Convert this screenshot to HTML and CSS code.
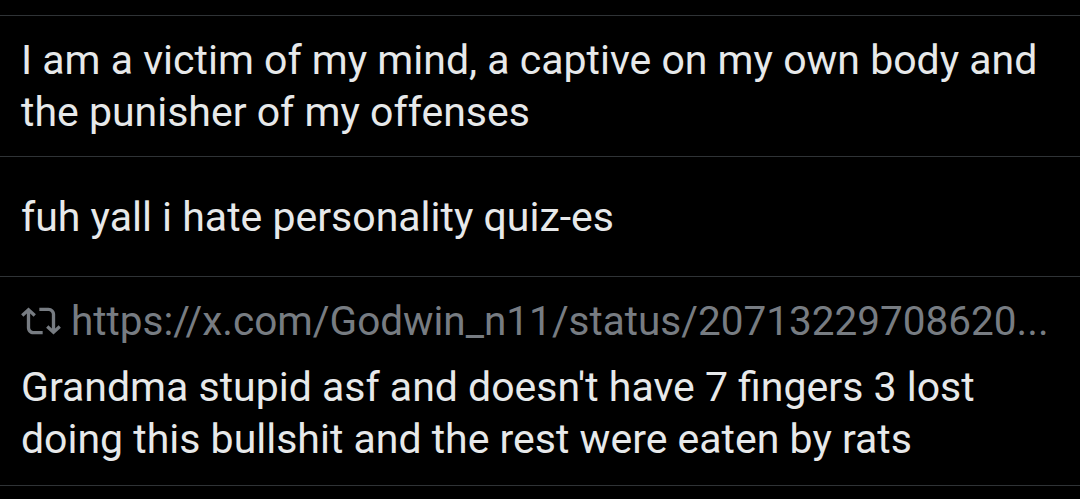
FILE: index.html
```html
<!DOCTYPE html>
<html lang="en">
<head>
    <meta charset="UTF-8">
    <meta name="viewport" content="width=device-width, initial-scale=1.0">
    <title>Posts</title>
    <link rel="stylesheet" href="styles.css">
</head>
<body>
    <div class="feed">
        <div class="post">
            <p class="post-text">I am a victim of my mind, a captive on my own body and the punisher of my offenses</p>
        </div>

        <div class="post post-short">
            <p class="post-text">fuh yall i hate personality quiz-es</p>
        </div>

        <!-- Repost with link -->
        <div class="post post-repost">
            <div class="repost">
                <svg class="repost-icon" viewBox="0 0 24 24" aria-hidden="true">
                    <path d="M4.5 3.88l4.432 4.14-1.364 1.46L5.5 7.55V16c0 1.1.896 2 2 2H13v2H7.5c-2.209 0-4-1.79-4-4V7.55L1.432 9.48.068 8.02 4.5 3.88zM16.5 6H11V4h5.5c2.209 0 4 1.790 4 4v8.45l2.068-1.93 1.364 1.46-4.432 4.14-4.432-4.14 1.364-1.46 2.068 1.93V8c0-1.1-.896-2-2-2z"/>
                </svg>
                <span class="repost-link">https://x.com/Godwin_n11/status/20713229708620...</span>
            </div>
            <p class="post-text">Grandma stupid asf and doesn't have 7 fingers 3 lost doing this bullshit and the rest were eaten by rats</p>
        </div>
    </div>
</body>
</html>
```

FILE: styles.css
```css
body {
    margin: 0;
    background: #000000;
    font-family: Roboto, 'Noto Sans', sans-serif;
    color: #e7e9ea;
}

.feed {
    display: flex;
    flex-direction: column;
    padding-top: 15px;
}

.post {
    border-top: 1px solid #2f3336;
    padding: 18px 21px 18px 21px;
}

.post:last-child {
    border-bottom: 1px solid #2f3336;
}

.post-short {
    padding-top: 34px;
    padding-bottom: 33px;
}

.post-repost {
    padding-bottom: 20px;
}

.post-text {
    margin: 0;
    font-size: 41px;
    line-height: 52px;
}

/* Repost row */
.repost {
    display: flex;
    align-items: center;
    gap: 10px;
    margin-bottom: 14px;
    color: #777c82;
    font-size: 40.5px;
    line-height: 52px;
    white-space: nowrap;
}

.repost-icon {
    width: 40px;
    height: 40px;
    fill: #777c82;
    flex-shrink: 0;
}
```
